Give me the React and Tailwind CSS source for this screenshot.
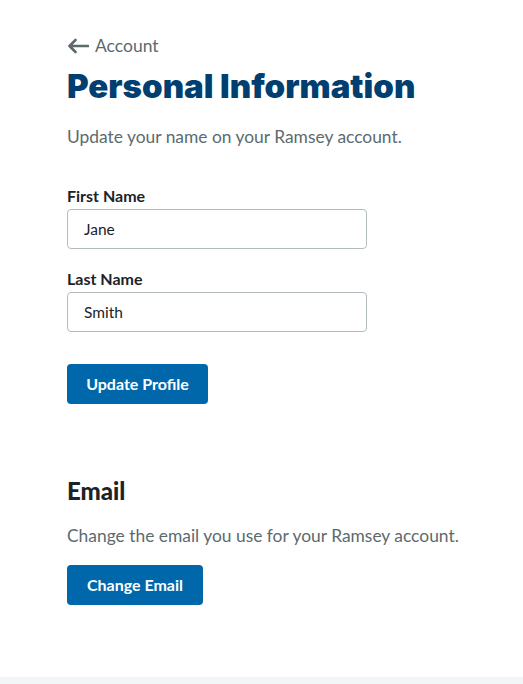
export default function App() {
  return (
    <div className="min-h-[684px] flex flex-col bg-white font-['Lato','Noto_Sans',sans-serif]">
      <div className="flex-1 pl-[67px] pr-[20px] pt-[36px]">
        <a href="#" className="flex items-center gap-[6px] text-[17.5px] leading-[20px] text-[#5c6a6e]">
          <svg width="22" height="16" viewBox="0 0 22 16" fill="none" stroke="#5c6a6e" strokeWidth="2.6" strokeLinecap="round" strokeLinejoin="round">
            <path d="M21 8H2.5M8.5 2L2.5 8l6 6" />
          </svg>
          Account
        </a>
        <h1 className="mt-[10px] font-['Inter',sans-serif] text-[33px] leading-[40px] font-black text-[#003f70] tracking-[0px]">
          Personal Information
        </h1>
        <p className="mt-[19px] text-[17.4px] leading-[24px] text-[#5c6a6e]">
          Update your name on your Ramsey account.
        </p>

        <div className="mt-[37px]">
          <label className="block text-[16px] leading-[20px] font-bold text-[#1c2326]">First Name</label>
          <input
            defaultValue="Jane"
            className="mt-[3px] block w-[300px] h-[40px] rounded-[4px] border border-[#b3bcbf] px-[16px] text-[15.5px] text-[#1c2326] outline-none"
          />
        </div>
        <div className="mt-[20px]">
          <label className="block text-[16px] leading-[20px] font-bold text-[#1c2326]">Last Name</label>
          <input
            defaultValue="Smith"
            className="mt-[3px] block w-[300px] h-[40px] rounded-[4px] border border-[#b3bcbf] px-[16px] text-[15.5px] text-[#1c2326] outline-none"
          />
        </div>
        <button className="mt-[32px] h-[40px] w-[141px] rounded-[4px] bg-[#0067ab] text-[16px] font-bold text-white">
          Update Profile
        </button>

        <h2 className="mt-[73px] text-[24px] leading-[28px] font-black text-[#1c2326]">Email</h2>
        <p className="mt-[19px] whitespace-nowrap text-[17.4px] leading-[24px] text-[#5c6a6e]">
          Change the email you use for your Ramsey account.
        </p>
        <button className="mt-[17px] h-[40px] w-[136px] rounded-[4px] bg-[#0067ab] text-[16px] font-bold text-white">
          Change Email
        </button>
      </div>
      <div className="h-[7px] bg-[#f2f6f7]" />
    </div>
  );
}
